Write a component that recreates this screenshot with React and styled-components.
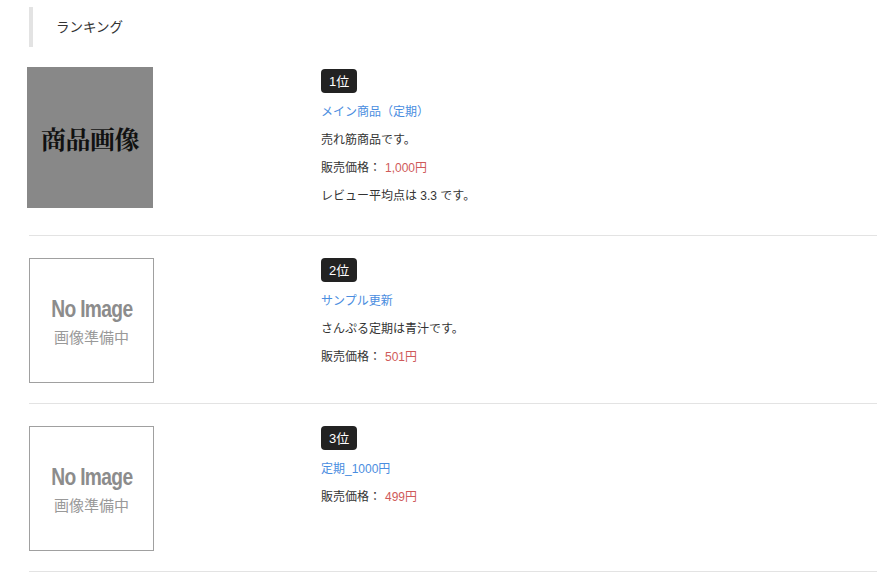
import React from 'react';
import styled, { createGlobalStyle } from 'styled-components';

const GlobalStyle = createGlobalStyle`
  body {
    margin: 0;
    background: #fff;
    font-family: "Liberation Sans", "Noto Sans CJK JP", sans-serif;
    color: #333;
  }
`;

const Page = styled.div`
  padding: 7px 11px 0 29px;
`;

const Heading = styled.h2`
  margin: 0 0 20px;
  height: 40px;
  line-height: 42px;
  border-left: 4px solid #e3e3e3;
  padding-left: 23px;
  font-size: 13.5px;
  font-weight: 400;
  color: #333;
`;

const List = styled.ul`
  list-style: none;
  margin: 0;
  padding: 0;
`;

const Row = styled.li`
  display: grid;
  grid-template-columns: 292px 1fr;
  padding: ${p => (p.$first ? '0' : '22px')} 0 20px;
  border-bottom: 1px solid #e3e3e3;
`;

const Thumb = styled.div`
  width: 126px;
  height: 141px;
  margin-left: -2px;
  background: #888;
  display: flex;
  align-items: center;
  justify-content: center;
  font-family: "Noto Serif CJK JP", "Noto Sans CJK JP", serif;
  font-weight: 700;
  font-size: 25px;
  color: #111;
  letter-spacing: -0.5px;
`;

const NoImage = styled.div`
  box-sizing: border-box;
  width: 125px;
  height: 125px;
  border: 1px solid #a0a0a0;
  display: flex;
  flex-direction: column;
  align-items: center;
  justify-content: center;
  color: #8c8c8c;
`;

const NoImageTitle = styled.span`
  font-family: "Liberation Sans", sans-serif;
  font-weight: 700;
  font-size: 24px;
  line-height: 24px;
  letter-spacing: -0.8px;
  transform: scaleX(0.8);
  margin-top: 2px;
`;

const NoImageSub = styled.span`
  font-family: "Noto Sans CJK JP", sans-serif;
  font-size: 15px;
  line-height: 20px;
  margin-top: 6px;
  color: #999;
`;

const Info = styled.div`
  padding-top: ${p => (p.$first ? '2px' : '0')};
  padding-bottom: 10px;
  display: flex;
  flex-direction: column;
  align-items: flex-start;
`;

const Badge = styled.span`
  display: inline-block;
  height: 24px;
  line-height: 25px;
  padding: 0 8px;
  border-radius: 4px;
  background: #222;
  color: #fff;
  font-size: 13px;
`;

const Line = styled.p`
  margin: 8px 0 0;
  height: 20px;
  line-height: 23px;
  font-size: 12px;
  color: #333;
`;

const NameLink = styled.a`
  color: #4a8de0;
  text-decoration: none;
`;

const Price = styled.span`
  color: #cf5a5a;
  margin-left: 4px;
`;

const items = [
  {
    rank: 1,
    name: 'メイン商品（定期）',
    desc: '売れ筋商品です。',
    price: '1,000円',
    review: 'レビュー平均点は 3.3 です。',
    image: true,
  },
  { rank: 2, name: 'サンプル更新', desc: 'さんぷる定期は青汁です。', price: '501円' },
  { rank: 3, name: '定期_1000円', price: '499円' },
];

const App = () => (
  <Page>
    <GlobalStyle />
    <Heading>ランキング</Heading>
    <List>
      {items.map((item, i) => (
        <Row key={item.rank} $first={i === 0}>
          <div>
            {item.image ? (
              <Thumb>商品画像</Thumb>
            ) : (
              <NoImage>
                <NoImageTitle>No Image</NoImageTitle>
                <NoImageSub>画像準備中</NoImageSub>
              </NoImage>
            )}
          </div>
          <Info $first={i === 0}>
            <Badge>{item.rank}位</Badge>
            <Line>
              <NameLink href="#">{item.name}</NameLink>
            </Line>
            {item.desc && <Line>{item.desc}</Line>}
            <Line>
              販売価格：<Price>{item.price}</Price>
            </Line>
            {item.review && <Line>{item.review}</Line>}
          </Info>
        </Row>
      ))}
    </List>
  </Page>
);

export default App;
